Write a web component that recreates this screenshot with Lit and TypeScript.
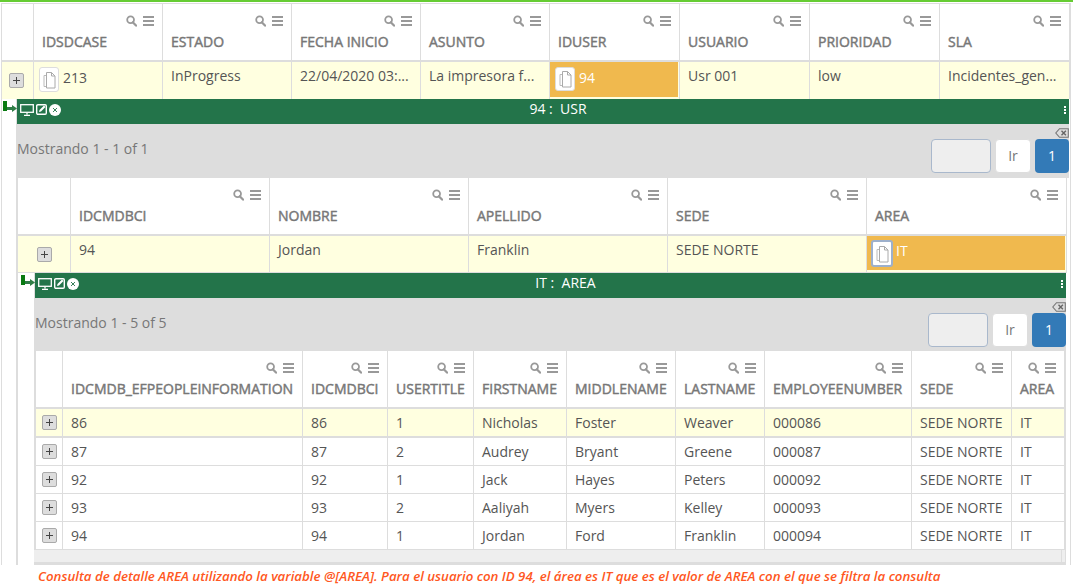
import { LitElement, html, css } from "lit";
import { customElement } from "lit/decorators.js";

const searchIcon = html`<svg class="hi" width="11" height="12" viewBox="0 0 11 12"><circle cx="4.600" cy="4.800" r="3.400" fill="none" stroke="#999" stroke-width="1.800"/><path d="M7 7.400l3 3.200" stroke="#999" stroke-width="2.200" stroke-linecap="round"/></svg>`;
const menuIcon = html`<svg class="hi" width="11" height="10" viewBox="0 0 11 10"><path d="M0 1h11M0 5h11M0 9h11" stroke="#999" stroke-width="1.800"/></svg>`;
const docIcon = html`<svg width="13" height="18" viewBox="0 0 13 18"><path d="M1 4.500h6M1 4.500V15.500h2" fill="none" stroke="#bbb"/><path d="M3.500 1.500h5l3.500 3.500v12h-8.500z" fill="#fff" stroke="#aaa"/><path d="M8.500 1.500v3.500h3.500" fill="none" stroke="#aaa"/></svg>`;
const plusBtn = html`<span class="plus"><svg width="7" height="7" viewBox="0 0 7 7"><path d="M3.500 0v7M0 3.500h7" stroke="#444" stroke-width="1"/></svg></span>`;
const monitor = html`<svg width="14" height="12" viewBox="0 0 14 12"><rect x=".7" y=".7" width="12.600" height="7.600" fill="none" stroke="#fff" stroke-width="1.300"/><path d="M7 9v1.500M4 11.300h6" stroke="#fff" stroke-width="1.300"/></svg>`;
const edit = html`<svg width="11" height="11" viewBox="0 0 11 11"><rect x=".7" y=".7" width="9.600" height="9.600" rx="1.200" fill="none" stroke="#fff" stroke-width="1.400"/><path d="M3 8l.5-2L8 1.500 9.500 3 5 7.500z" fill="#fff"/></svg>`;
const closeI = html`<svg width="12" height="12" viewBox="0 0 12 12"><circle cx="6" cy="6" r="6" fill="#fff"/><path d="M4 4l4 4M8 4l-4 4" stroke="#23744a" stroke-width=".9"/></svg>`;
const backspace = html`<svg width="14" height="10" viewBox="0 0 14 10"><path d="M4.500.7H13.300V9.300H4.500L.8 5z" fill="none" stroke="#777" stroke-width="1.100"/><path d="M6.500 2.800l4.400 4.400M10.900 2.800L6.500 7.200" stroke="#666" stroke-width="1.400"/></svg>`;
const arrow = html`<svg class="arrow" width="14" height="13" viewBox="0 0 14 13"><rect x="0" y="0" width="4" height="10" fill="#0a7a12"/><rect x="4" y="6" width="6" height="3" fill="#2f7d46"/><path d="M9 4l5 3.500-5 3.500z" fill="#2f7d46"/></svg>`;

type Cell = string | { text: string; doc?: boolean; hl?: boolean; focus?: boolean };

const g1 = [32, 129, 129, 129, 129, 130, 130, 130, 130];
const g2 = [53, 199, 199, 199, 199, 200];
const g3 = [27, 240, 85, 86, 93, 109, 89, 147, 100, 53];

const g3Rows: string[][] = [
  ["86", "86", "1", "Nicholas", "Foster", "Weaver", "000086"],
  ["87", "87", "2", "Audrey", "Bryant", "Greene", "000087"],
  ["92", "92", "1", "Jack", "Hayes", "Peters", "000092"],
  ["93", "93", "2", "Aaliyah", "Myers", "Kelley", "000093"],
  ["94", "94", "1", "Jordan", "Ford", "Franklin", "000094"],
];

@customElement("app-root")
export class AppRoot extends LitElement {
  static styles = css`
    :host { display: block; width: 1073px; height: 584px; overflow: hidden; background: #fff;
      font-family: "Open Sans", sans-serif; font-size: 14px; line-height: 20px; color: #555; }
    .top { height: 2px; background: #66cc33; margin-bottom: 1px; }
    .page { margin-left: 1px; width: 1070px; box-sizing: border-box; border-left: 1px solid #ddd; border-right: 1px solid #ddd; }
    .grid { display: grid; }
    .g1 { border-top: 1px solid #ddd; }
    .hc { height: 58px; box-sizing: border-box; border-right: 1px solid #ddd; border-bottom: 2px solid #ddd;
      padding: 11px 8px 0; background: #fff; min-width: 0; }
    .tools { display: flex; justify-content: flex-end; align-items: center; gap: 6px; height: 12px; margin-bottom: 5px; }
    .hi { display: block; }
    .lbl { font-weight: 400; -webkit-text-stroke: 0.45px #777; color: #777; white-space: nowrap; }
    .c { box-sizing: border-box; border-right: 1px solid #ddd; padding: 4px 8px 0; background: #ffffe0; white-space: nowrap; min-width: 0; }
    .tall { height: 37px; }
    .tall2 { height: 37px; border-bottom: 1px solid #ddd; }
    .sm { height: 28px; border-bottom: 1px solid #ddd; background: #fff; }
    .sm.first { height: 29px; border-bottom-width: 2px; background: #ffffe0; }
    .ctr { display: flex; align-items: center; justify-content: center; padding: 0; }
    .g1 .ctr { padding-right: 2px; }
    .plus { display: flex; align-items: center; justify-content: center; width: 15px; height: 15px; box-sizing: border-box;
      background: #ddd; border: 1px solid #aaa; border-radius: 2px; }
    .docCell { display: flex; align-items: flex-start; gap: 4px; padding: 5px 0 0 5px; }
    .docCell .t { margin-top: 1px; }
    .doc { display: flex; align-items: center; justify-content: center; width: 20px; height: 25px; box-sizing: border-box;
      background: #fff; border: 1px solid #ddd; border-radius: 3px; flex: none; }
    .hl { background: #f0b94e; color: #fff; box-shadow: inset -1px -2px 0 #ffffe0; }
    .hl .doc { height: 24px; }
    .focus { padding: 4px 0 0 4px; gap: 3px; }
    .focus .doc { width: 22px; height: 27px; border: 2px solid #9db0cc; }
    .d1 { margin-left: 14px; border-left: 2px solid #ddd; }
    .d2 { margin-left: 16px; margin-right: 4px; border-left: 2px solid #ddd; border-right: 1px solid #ddd; }
    .bar { position: relative; display: flex; align-items: center; height: 25px; box-sizing: border-box; padding-bottom: 4px; background: #23744a; color: #fff;
      margin-left: -1px; margin-right: 1px; }
    .d2 .bar { margin-right: -1px; }
    .arrow { position: absolute; left: -14px; top: 2px; }
    .bi { display: flex; align-items: center; gap: 2px; width: 44px; padding-left: 3px; flex: none; }
    .title { flex: 1; text-align: center; white-space: pre; margin-bottom: 2px; }
    .dots { width: 17px; flex: none; display: flex; flex-direction: column; align-items: flex-end; gap: 1px; padding-right: 3px; box-sizing: border-box; }
    .dots i { width: 2px; height: 2px; background: #fff; display: block; }
    .panel { display: flex; justify-content: space-between; height: 54px; box-sizing: border-box; background: #ddd; margin-right: 1px; margin-left: -1px; }
    .d2 .panel { height: 53px; margin-right: -1px; }
    .msg { padding-top: 15px; color: #777; }
    .pr { display: flex; flex-direction: column; align-items: flex-end; padding-top: 4px; }
    .pg { display: flex; gap: 4px; margin-top: 1px; height: 34px; }
    .pg span { box-sizing: border-box; height: 34px; display: flex; align-items: center; justify-content: center; border-radius: 4px; }
    .inp { width: 60px; background: #eee; border: 1px solid #a9b8cc; }
    .ir { width: 36px; background: #fff; border: 1px solid #ddd; color: #777; }
    .one { width: 34px; background: #337ab7; color: #fff; }
    .sb { height: 15px; box-sizing: border-box; background: #eee; border-bottom: 3px solid #ddd; margin-left: -2px; position: relative; }
    .sb::after { content: ""; position: absolute; right: 3px; top: 0; width: 1px; height: 12px; background: #ddd; }
    .cap { margin: 2px 0 0 38px; font-size: 13.27px; line-height: 18px; font-style: italic; font-weight: 600; color: #ff5722; white-space: nowrap; }
  `;

  private head(labels: string[]) {
    return [
      html`<div class="hc"></div>`,
      ...labels.map(
        (l) => html`<div class="hc"><div class="tools">${searchIcon}${menuIcon}</div><div class="lbl">${l}</div></div>`
      ),
    ];
  }

  private cell(c: Cell, cls: string) {
    if (typeof c === "string") return html`<div class="c ${cls}">${c}</div>`;
    const k = `c ${cls} docCell ${c.hl ? "hl" : ""} ${c.focus ? "focus" : ""}`;
    return html`<div class=${k}><span class="doc">${docIcon}</span><span class="t">${c.text}</span></div>`;
  }

  private tpl(w: number[]) {
    return w.map((n) => n + "px").join(" ");
  }

  private bar(title: string) {
    return html`<div class="bar">
      ${arrow}
      <div class="bi">${monitor}${edit}${closeI}</div>
      <div class="title">${title}</div>
      <div class="dots"><i></i><i></i><i></i></div>
    </div>`;
  }

  private panel(msg: string) {
    return html`<div class="panel">
      <div class="msg">${msg}</div>
      <div class="pr">
        ${backspace}
        <div class="pg"><span class="inp"></span><span class="ir">Ir</span><span class="one">1</span></div>
      </div>
    </div>`;
  }

  render() {
    const row1: Cell[] = [
      { text: "213", doc: true },
      "InProgress",
      "22/04/2020 03:...",
      "La impresora f...",
      { text: "94", doc: true, hl: true },
      "Usr 001",
      "low",
      "Incidentes_gen...",
    ];
    const row2: Cell[] = ["94", "Jordan", "Franklin", "SEDE NORTE", { text: "IT", doc: true, hl: true, focus: true }];
    return html`
      <div class="top"></div>
      <div class="page">
        <div class="grid g1" style="grid-template-columns:${this.tpl(g1)}">
          ${this.head(["IDSDCASE", "ESTADO", "FECHA INICIO", "ASUNTO", "IDUSER", "USUARIO", "PRIORIDAD", "SLA"])}
          <div class="c tall ctr">${plusBtn}</div>
          ${row1.map((c) => this.cell(c, "tall"))}
        </div>
        <div class="d1">
          ${this.bar("94 :  USR")}
          ${this.panel("Mostrando 1 - 1 of 1")}
          <div class="grid" style="grid-template-columns:${this.tpl(g2)}">
            ${this.head(["IDCMDBCI", "NOMBRE", "APELLIDO", "SEDE", "AREA"])}
            <div class="c tall2 ctr">${plusBtn}</div>
            ${row2.map((c) => this.cell(c, "tall2"))}
          </div>
          <div class="d2">
            ${this.bar("IT :  AREA")}
            ${this.panel("Mostrando 1 - 5 of 5")}
            <div class="grid" style="grid-template-columns:${this.tpl(g3)}">
              ${this.head(["IDCMDB_EFPEOPLEINFORMATION", "IDCMDBCI", "USERTITLE", "FIRSTNAME", "MIDDLENAME", "LASTNAME", "EMPLOYEENUMBER", "SEDE", "AREA"])}
              ${g3Rows.map((r, i) => {
                const k = i === 0 ? "sm first" : "sm";
                return html`<div class="c ${k} ctr">${plusBtn}</div>
                  ${[...r, "SEDE NORTE", "IT"].map((c) => this.cell(c, k))}`;
              })}
            </div>
            <div class="sb"></div>
          </div>
        </div>
      </div>
      <div class="cap">Consulta de detalle AREA utilizando la variable @[AREA]. Para el usuario con ID 94, el área es IT que es el valor de AREA con el que se filtra la consulta</div>
    `;
  }
}
